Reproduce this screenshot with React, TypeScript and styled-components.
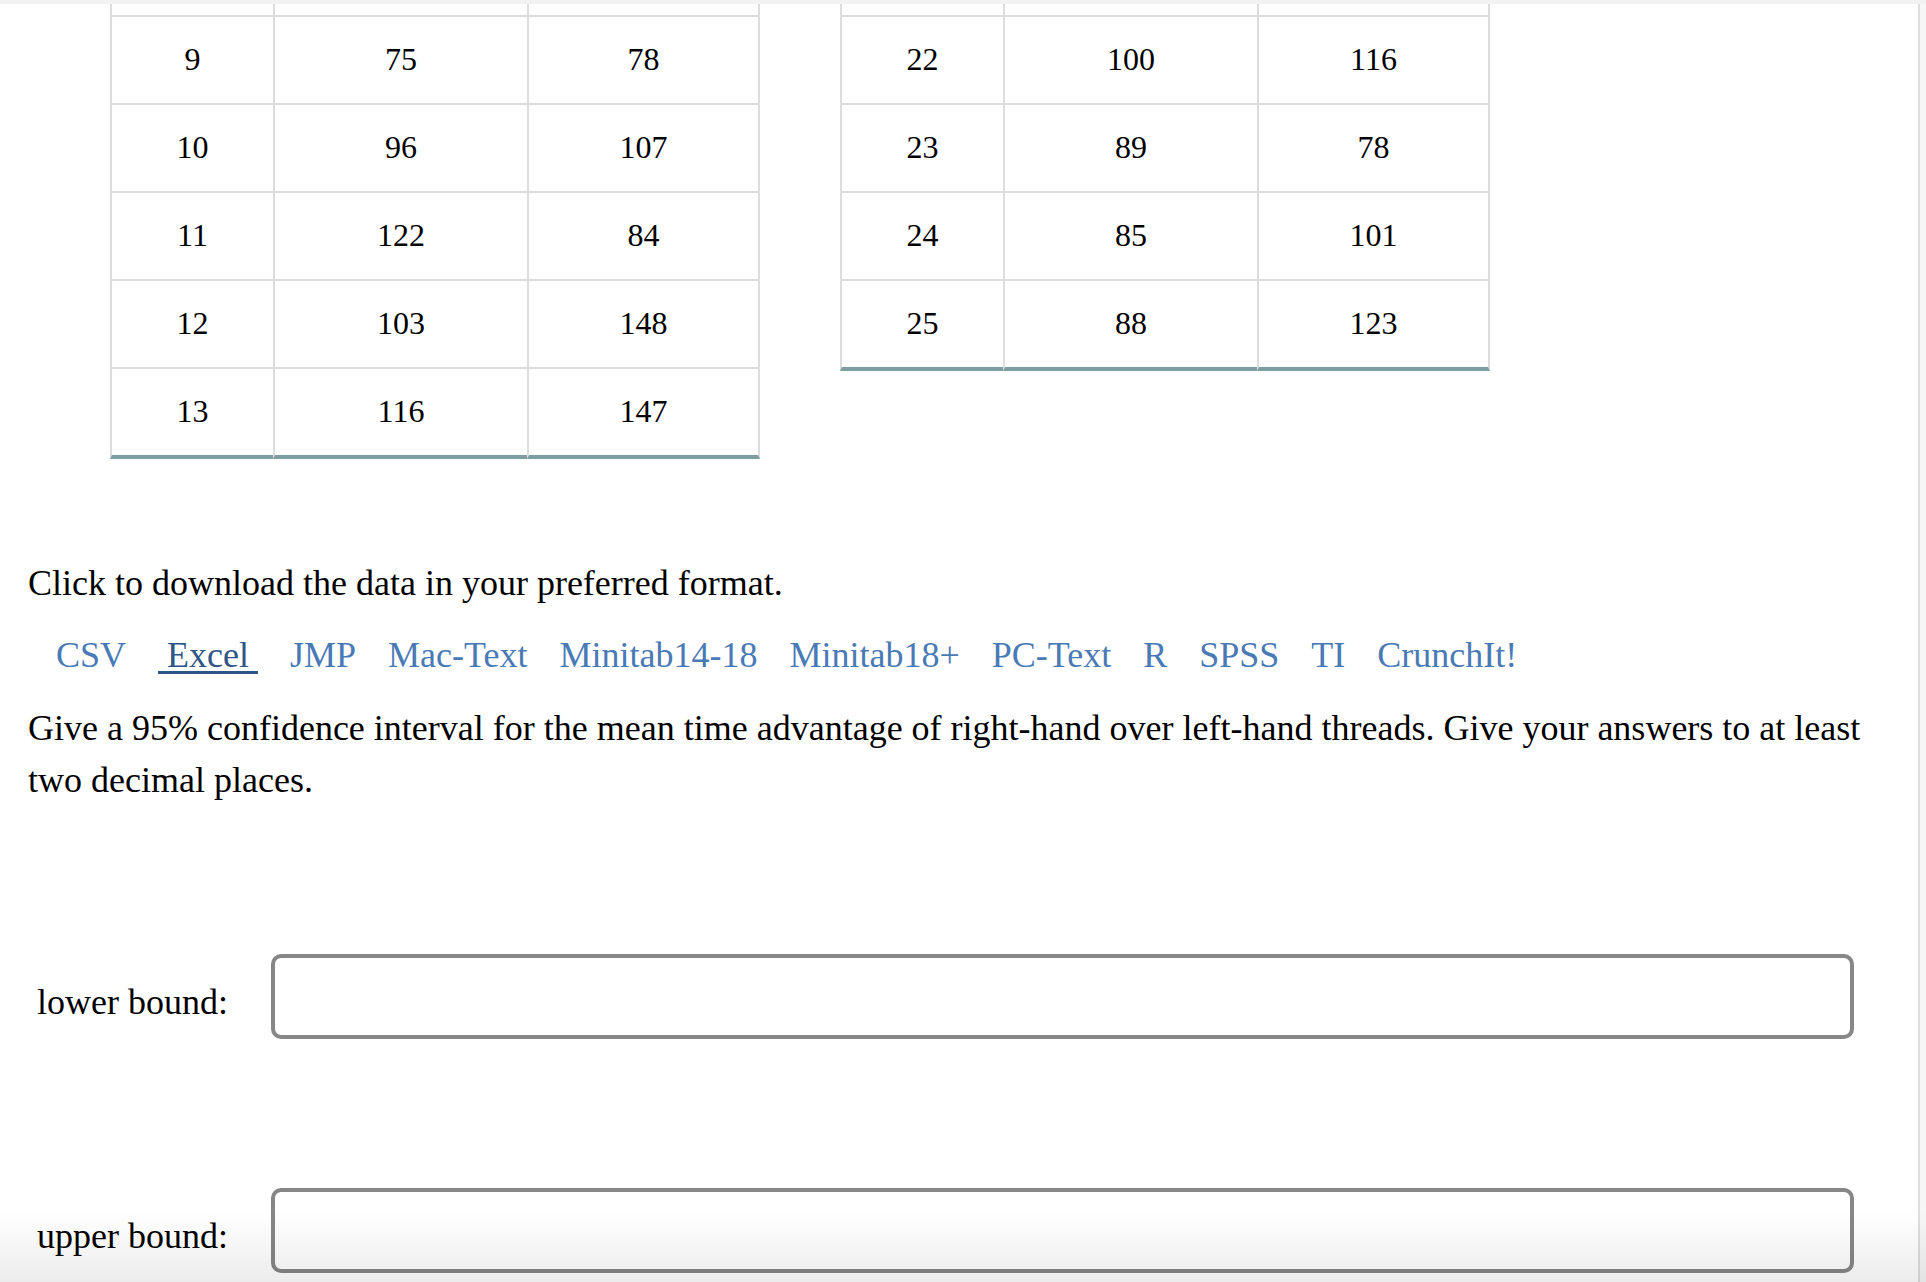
import React from 'react';
import styled, { createGlobalStyle } from 'styled-components';

const leftRows = [
  ['9', '75', '78'],
  ['10', '96', '107'],
  ['11', '122', '84'],
  ['12', '103', '148'],
  ['13', '116', '147'],
];

const rightRows = [
  ['22', '100', '116'],
  ['23', '89', '78'],
  ['24', '85', '101'],
  ['25', '88', '123'],
];

const colWidths = [161, 252, 229];

const formats = ['CSV', ' Excel ', 'JMP', 'Mac-Text', 'Minitab14-18', 'Minitab18+', 'PC-Text', 'R', 'SPSS', 'TI', 'CrunchIt!'];

const DataTable: React.FC<{ rows: string[][] }> = ({ rows }) => (
  <Table>
    <tbody>
      <tr>
        {colWidths.map((w, i) => (
          <Cell key={i} $w={w} $stub>
            {'\u00a0'}
          </Cell>
        ))}
      </tr>
      {rows.map((row, r) => (
        <tr key={r}>
          {row.map((value, i) => (
            <Cell key={i} $w={colWidths[i]} $last={r === rows.length - 1}>
              {value}
            </Cell>
          ))}
        </tr>
      ))}
    </tbody>
  </Table>
);

const App: React.FC = () => {
  return (
    <>
      <GlobalStyle />
      <Page>
        <TopStrip />
        <Body>
          <Main>
            <Tables>
              <DataTable rows={leftRows} />
              <DataTable rows={rightRows} />
            </Tables>

            <Intro>Click to download the data in your preferred format.</Intro>
            <LinkRow>
              {formats.map((f) => (
                <FormatLink key={f} href="#" $active={f === ' Excel '}>
                  {f}
                </FormatLink>
              ))}
            </LinkRow>
            <Question>
              Give a 95% confidence interval for the mean time advantage of right-hand over left-hand threads. Give your
              answers to at least two decimal places.
            </Question>

            <Answers>
              <AnswerRow>
                <Label htmlFor="lower">lower bound:</Label>
                <Input id="lower" type="text" />
              </AnswerRow>
              <AnswerRow>
                <Label htmlFor="upper">upper bound:</Label>
                <Input id="upper" type="text" />
              </AnswerRow>
            </Answers>
          </Main>
          <Gutter />
        </Body>
        <BottomFade />
      </Page>
    </>
  );
};

const GlobalStyle = createGlobalStyle`
  html, body {
    margin: 0;
    padding: 0;
    overflow: hidden;
    background: #fff;
  }
  body {
    font-family: "Liberation Serif", "Times New Roman", serif;
    color: #000;
  }
`;

const Page = styled.div`
  display: flex;
  flex-direction: column;
  min-height: 100vh;
`;

const TopStrip = styled.div`
  height: 4px;
  background: #f2f2f2;
`;

const Body = styled.div`
  flex: 1;
  display: flex;
`;

const Main = styled.main`
  flex: 1;
  min-width: 0;
  padding: 0 36px 0 28px;
`;

const Gutter = styled.div`
  width: 6px;
  border-left: 2px solid #dedede;
  background: #f6f6f6;
`;

const Tables = styled.div`
  display: flex;
  align-items: flex-start;
  gap: 80px;
  padding-left: 82px;
`;

const Table = styled.table`
  border-collapse: separate;
  border-spacing: 0;
`;

const Cell = styled.td<{ $w: number; $stub?: boolean; $last?: boolean }>`
  width: ${({ $w }) => $w}px;
  padding: 0 0 2px;
  text-align: center;
  vertical-align: middle;
  font-size: 32px;
  line-height: ${({ $stub }) => ($stub ? 9 : 84)}px;
  border-left: 2px solid #dddddd;
  border-bottom: ${({ $last }) => ($last ? '4px solid #7f9ea3' : '2px solid #dddddd')};

  &:last-child {
    border-right: 2px solid #dddddd;
  }
`;

const Intro = styled.p`
  margin: 98px 0 0;
  font-size: 36px;
  line-height: 52px;
`;

const LinkRow = styled.div`
  display: flex;
  gap: 32px;
  margin-top: 20px;
  padding-left: 28px;
  font-size: 36px;
  line-height: 52px;
`;

const FormatLink = styled.a<{ $active?: boolean }>`
  white-space: pre;
  color: ${({ $active }) => ($active ? '#2f5587' : '#4a7ab6')};
  text-decoration: ${({ $active }) => ($active ? 'underline' : 'none')};
  text-decoration-thickness: 3px;
  text-underline-offset: 4px;
`;

const Question = styled.p`
  margin: 21px 0 0;
  font-size: 36px;
  line-height: 52px;
`;

const Answers = styled.div`
  display: flex;
  flex-direction: column;
  gap: 149px;
  margin-top: 148px;
`;

const AnswerRow = styled.div`
  display: grid;
  grid-template-columns: 234px 1fr;
  align-items: center;
  padding: 0 28px 0 9px;
`;

const Label = styled.label`
  padding-top: 11px;
  font-size: 36px;
  line-height: 52px;
`;

const Input = styled.input`
  box-sizing: border-box;
  width: 100%;
  height: 85px;
  padding: 0 14px;
  border: 4px solid #878787;
  border-radius: 10px;
  background: #fff;
  font-family: "Liberation Serif", "Times New Roman", serif;
  font-size: 32px;
  outline: none;
`;

const BottomFade = styled.div`
  position: fixed;
  left: 0;
  right: 0;
  bottom: 0;
  height: 70px;
  pointer-events: none;
  background: linear-gradient(to bottom, rgba(0, 0, 0, 0), rgba(0, 0, 0, 0.075));
`;

export default App;
